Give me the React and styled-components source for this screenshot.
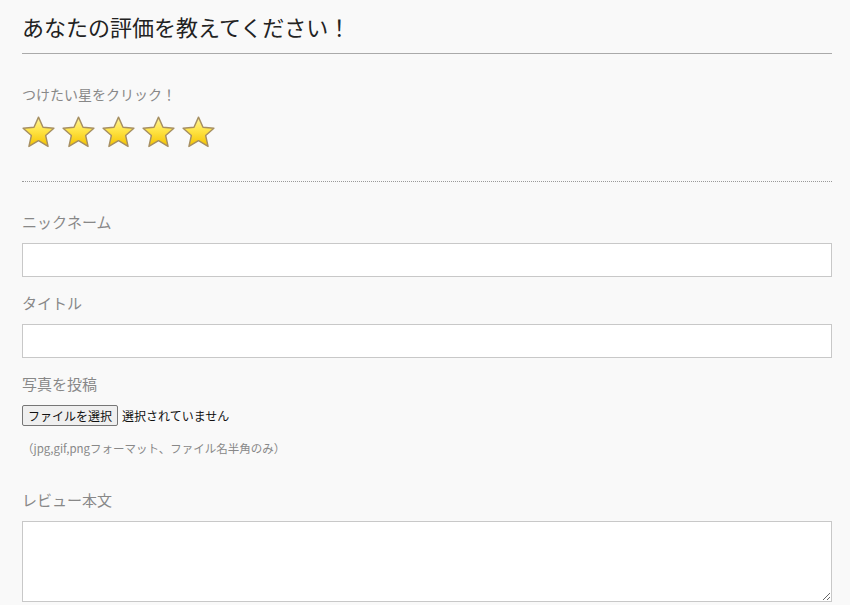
import React from "react";
import styled, { createGlobalStyle } from "styled-components";

const GlobalStyle = createGlobalStyle`
	html, body {
		margin: 0;
		padding: 0;
		background: #f9f9f9;
	}
	body {
		font-family: "Noto Sans CJK JP", "Noto Sans", sans-serif;
		color: #333;
	}
`;

const Page = styled.div`
	padding: 0 18px 0 22px;
	box-sizing: border-box;
	width: 850px;
`;

const Title = styled.h2`
	margin: 0;
	padding: 10px 0 11px;
	font-size: 22px;
	font-weight: 400;
	line-height: 32px;
	color: #222;
	border-bottom: 1px solid #aaa;
`;

const RatingBlock = styled.div`
	padding: 30px 0 33px;
	border-bottom: 1px dotted #999;
`;

const Hint = styled.p`
	margin: 0 0 12px;
	font-size: 14px;
	line-height: 20px;
	color: #888;
`;

const Stars = styled.div`
	display: flex;
	gap: 7px;
`;

const StarButton = styled.button`
	display: block;
	width: 33px;
	height: 32px;
	padding: 0;
	border: 0;
	background: none;
	cursor: pointer;
`;

const Fields = styled.div`
	padding-top: 29px;
`;

const Field = styled.div`
	margin-bottom: ${(props) => props.gap || "15px"};
`;

const Label = styled.label`
	display: block;
	font-size: 15px;
	line-height: 22px;
	color: #888;
	margin-bottom: 10px;
`;

const TextInput = styled.input`
	display: block;
	width: 100%;
	height: 34px;
	box-sizing: border-box;
	border: 1px solid #c8c8c8;
	background: #fff;
	font-size: 14px;
	padding: 4px 8px;
`;

const FileRow = styled.div`
	display: flex;
	align-items: center;
	gap: 4px;
	height: 21px;
	font-size: 12px;
	color: #111;
`;

const FileButton = styled.button`
	height: 21px;
	padding: 0 5px;
	font-family: inherit;
	font-size: 12px;
	line-height: 19px;
	color: #111;
	background: #efefef;
	border: 1px solid #767676;
	border-radius: 2px;
`;

const Note = styled.p`
	margin: 13px 0 0;
	font-size: 11.5px;
	line-height: 18px;
	color: #888;
`;

const TextArea = styled.textarea`
	display: block;
	width: 100%;
	height: 81px;
	box-sizing: border-box;
	border: 1px solid #c8c8c8;
	background: #fff;
	font-size: 14px;
	padding: 4px 8px;
`;

const Star = ({ id }) => (
	<svg width="33" height="32" viewBox="1 1 30 29">
		<defs>
			<linearGradient id={id} x1="0" y1="0" x2="0" y2="1">
				<stop offset="0" stopColor="#fff4a0" />
				<stop offset="0.45" stopColor="#ffe548" />
				<stop offset="1" stopColor="#f3c200" />
			</linearGradient>
		</defs>
		<path
			d="M16 2 L20.1 11.2 L30 12.1 L22.5 18.7 L24.7 28.6 L16 23.4 L7.3 28.6 L9.5 18.7 L2 12.1 L11.9 11.2 Z"
			fill={`url(#${id})`}
			stroke="#a68f62"
			strokeWidth="1.3"
			strokeLinejoin="round"
		/>
	</svg>
);

const App = () => {
	return (
		<Page>
			<GlobalStyle />
			<Title>あなたの評価を教えてください！</Title>
			<RatingBlock>
				<Hint>つけたい星をクリック！</Hint>
				<Stars>
					{[1, 2, 3, 4, 5].map((n) => (
						<StarButton key={n} type="button" aria-label={`${n}`}>
							<Star id={`star-grad-${n}`} />
						</StarButton>
					))}
				</Stars>
			</RatingBlock>
			<Fields>
				<Field>
					<Label htmlFor="nickname">ニックネーム</Label>
					<TextInput id="nickname" type="text" />
				</Field>
				<Field>
					<Label htmlFor="title">タイトル</Label>
					<TextInput id="title" type="text" />
				</Field>
				<Field gap="32px">
					<Label>写真を投稿</Label>
					<FileRow>
						<FileButton type="button">ファイルを選択</FileButton>
						<span>選択されていません</span>
					</FileRow>
					<Note>（jpg,gif,pngフォーマット、ファイル名半角のみ）</Note>
				</Field>
				<Field>
					<Label htmlFor="body">レビュー本文</Label>
					<TextArea id="body" />
				</Field>
			</Fields>
		</Page>
	);
};

export default App;
